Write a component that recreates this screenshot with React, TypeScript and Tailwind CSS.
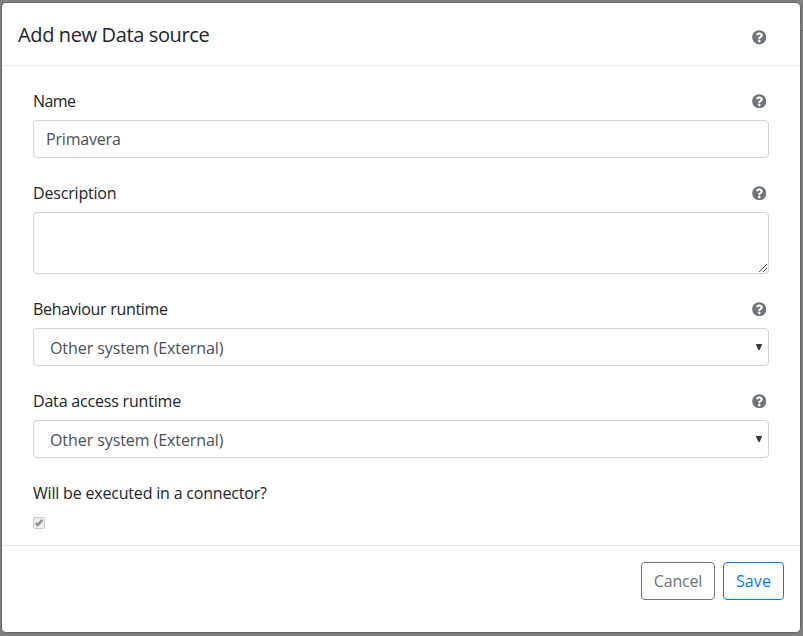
import type { ReactNode } from 'react';
import { FaQuestionCircle } from 'react-icons/fa';

function Help() {
  return <FaQuestionCircle className="block h-[14.5px] w-[14.5px] shrink-0 text-[#6c757d]" />;
}

function Label({ children, spacing }: { children: ReactNode; spacing: string }) {
  return (
    <div className="flex h-6 items-center justify-between pr-[3px]">
      <label className={`block whitespace-nowrap leading-6 text-[#212529] ${spacing}`}>{children}</label>
      <Help />
    </div>
  );
}

function Select({ value }: { value: string }) {
  return (
    <div className="mt-[7px] flex h-[38px] items-center justify-between rounded border border-[#ced4da] bg-white pl-4 pr-[6px] pt-px">
      <span className="whitespace-nowrap tracking-[-0.08px] text-[#495057]">{value}</span>
      <svg width="6" height="6" viewBox="0 0 6 6" className="mb-[2px] text-[#343a40]">
        <path d="M0 0H6L5.6 1.5L3.6 6H2.4L0.4 1.5Z" fill="currentColor" />
      </svg>
    </div>
  );
}

export default function App() {
  return (
    <div className="grid h-[636px] w-[803px] overflow-hidden bg-[#7f7f7f] font-['Open_Sans',sans-serif] text-base">
      <div className="col-start-1 row-start-1 h-[31px] border-b border-[#656565]" />
      <div className="col-start-1 row-start-1 ml-px mt-[2px] flex h-[631px] w-[800px] flex-col rounded-[5px] border border-[#656565] bg-white">
        <header className="flex h-[63px] items-start justify-between border-b border-[#e9ecef] pl-4 pr-[34px]">
          <h5 className="mt-[17px] whitespace-nowrap text-xl leading-[30px] tracking-[-0.37px] text-[#212529]">Add new Data source</h5>
          <div className="mt-[27px]">
            <Help />
          </div>
        </header>
        <main className="h-[479px] pl-[31px] pr-[31px] pt-[23px]">
          <Label spacing="tracking-[-0.6px]">Name</Label>
          <div className="mt-[7px] flex h-[38px] items-center rounded border border-[#ced4da] pl-3 text-[#495057]">
            <span className="tracking-[-0.18px]">Primavera</span>
          </div>
          <div className="mt-[23px]">
            <Label spacing="tracking-[-0.18px]">Description</Label>
            <div className="mt-[7px] flex h-[62px] items-end justify-end rounded border border-[#ced4da] p-px">
              <svg width="8" height="8" viewBox="0 0 8 8" className="text-[#444]" stroke="currentColor" strokeWidth="0.9">
                <path d="M0 8L8 0M4 8L8 4" />
              </svg>
            </div>
          </div>
          <div className="mt-[23px]">
            <Label spacing="tracking-[-0.3px]">Behaviour runtime</Label>
            <Select value="Other system (External)" />
          </div>
          <div className="mt-[23px]">
            <Label spacing="tracking-[-0.19px]">Data access runtime</Label>
            <Select value="Other system (External)" />
          </div>
          <div className="mt-[23px]">
            <span className="block h-6 leading-6 tracking-[-0.19px] text-[#212529]">Will be executed in a connector?</span>
            <div className="mt-[12px] flex h-3 w-3 items-center justify-center rounded-[2px] border border-[#c8c8c8] bg-[#eee]">
              <svg width="8" height="8" viewBox="0 0 8 8" fill="none" stroke="#949494" strokeWidth="2.6">
                <path d="M0.6 4L2.8 6L7.3 0.8" />
              </svg>
            </div>
          </div>
        </main>
        <footer className="flex h-[87px] justify-end gap-2 border-t border-[#e1e4e7] pr-4 pt-4">
          <button className="h-[38px] w-[74px] rounded border border-[#6c757d] tracking-[-0.17px] text-[#6c757d]">Cancel</button>
          <button className="h-[38px] w-[61px] rounded border border-[#007bff] tracking-[0.1px] text-[#007bff]">Save</button>
        </footer>
      </div>
    </div>
  );
}
